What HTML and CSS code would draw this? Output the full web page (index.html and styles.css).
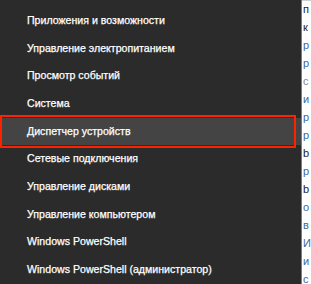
FILE: index.html
```html
<!DOCTYPE html>
<html lang="ru">
<head>
<meta charset="utf-8">
<link rel="stylesheet" href="styles.css">
</head>
<body>
<div class="screen">
  <nav class="menu">
    <div class="item">Приложения и возможности</div>
    <div class="item">Управление электропитанием</div>
    <div class="item">Просмотр событий</div>
    <div class="item">Система</div>
    <div class="item active">Диспетчер устройств<span class="mark"></span></div>
    <div class="item">Сетевые подключения</div>
    <div class="item">Управление дисками</div>
    <div class="item">Управление компьютером</div>
    <div class="item">Windows PowerShell</div>
    <div class="item">Windows PowerShell (администратор)</div>
  </nav>
  <div class="behind">
    <div class="topline"></div>
    <div class="txt">
      <span class="d">п</span>
      <span class="d">к</span>
      <span class="b">р</span>
      <span class="b">р</span>
      <span class="g">с</span>
      <span class="b">и</span>
      <span class="b">р</span>
      <span class="b">р</span>
      <span class="d">b</span>
      <span class="b">р</span>
      <span class="d">b</span>
      <span class="b">o</span>
      <span class="b">в</span>
      <span class="b">И</span>
      <span class="b">и</span>
      <span class="b">с</span>
    </div>
  </div>
</div>
</body>
</html>
```
FILE: styles.css
```css
html, body {
  margin: 0;
  padding: 0;
  background: #ffffff;
  overflow: hidden;
}
.screen {
  display: flex;
  width: 311px;
  height: 284px;
}
.menu {
  width: 302px;
  flex: none;
  background: #2b2b2b;
  border-right: 1px solid #7d7d7d;
  padding-top: 7px;
  box-sizing: border-box;
  display: flex;
  flex-direction: column;
  font-family: "Liberation Sans", Arial, sans-serif;
  font-size: 10.6px;
  color: #ffffff;
  -webkit-text-stroke: 0.25px #ffffff;
}
.item {
  height: 27.67px;
  line-height: 27.67px;
  padding-left: 27px;
  white-space: nowrap;
  position: relative;
  flex: none;
}
.item.active {
  background: #444444;
}
.mark {
  position: absolute;
  left: 0;
  top: -3px;
  width: 296px;
  height: 33px;
  border: 2px solid #ff2200;
  box-sizing: border-box;
}
.behind {
  flex: 1;
  position: relative;
  overflow: hidden;
  background: #ffffff;
}
.topline {
  height: 1px;
  background: #cfcfcf;
}
.txt {
  display: flex;
  flex-direction: column;
  padding-left: 1px;
  font-family: "Liberation Sans", sans-serif;
  font-size: 11px;
  line-height: 18px;
  margin-top: -1px;
  white-space: nowrap;
}
.d { color: #222222; }
.b { color: #3d6a9a; }
.g { color: #888888; }
```
